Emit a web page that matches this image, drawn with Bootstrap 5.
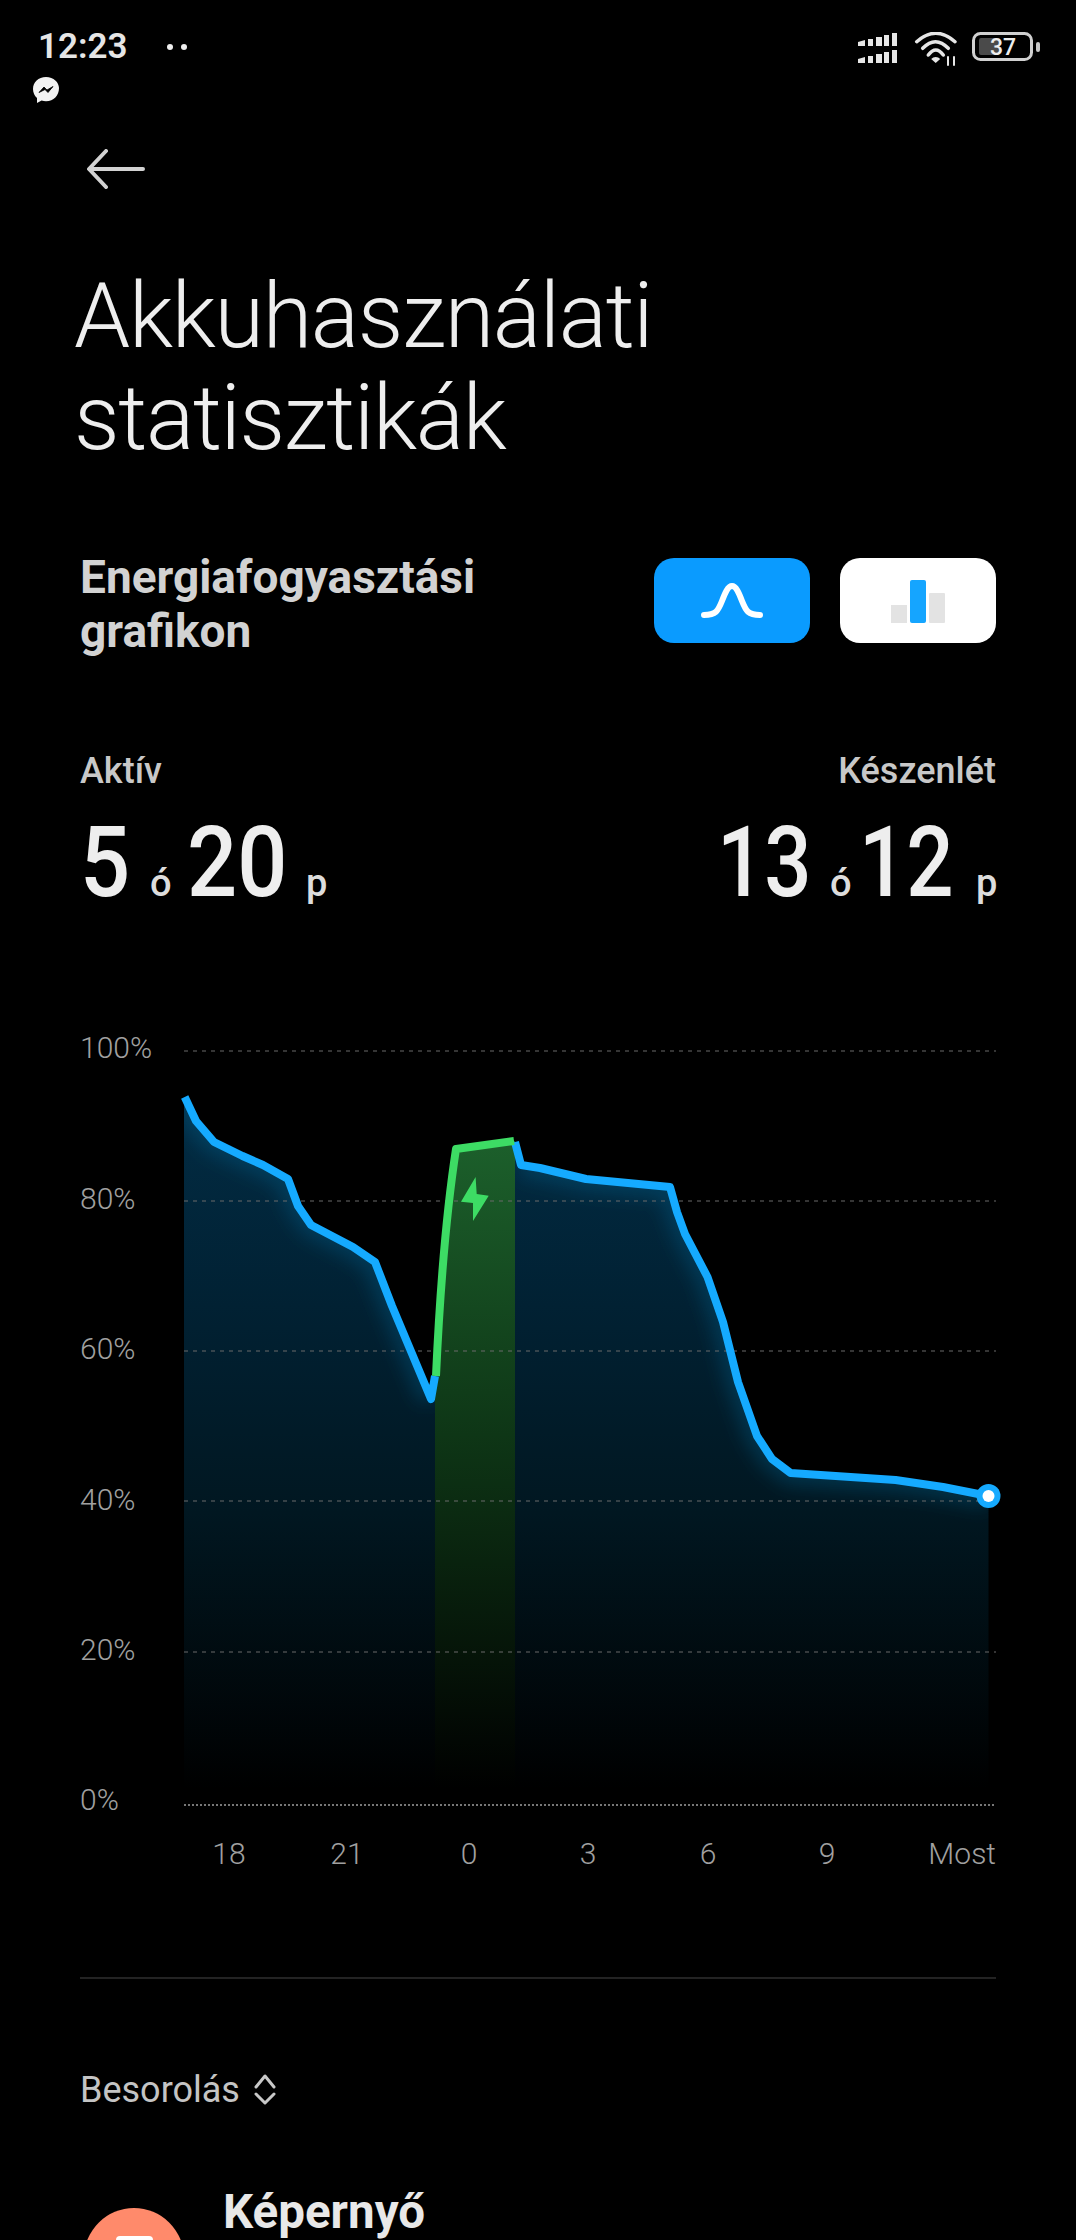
<!DOCTYPE html>
<html lang="hu">
<head>
<meta charset="utf-8">
<title>Akkuhasználati statisztikák</title>
<link href="https://cdn.jsdelivr.net/npm/bootstrap@5.3.0/dist/css/bootstrap.min.css" rel="stylesheet">
<style>
html,body{background:#000;margin:0}
body{font-family:Roboto,"Liberation Sans",sans-serif;width:1076px;height:2240px;overflow:hidden;color:#eee}
svg{display:block}
.status-area{height:130px;padding:0 36px 0 38px}
.clock{font-size:35px;font-weight:600;line-height:40px;color:#e6e6e6;padding-top:27px}
.dots{gap:8px;margin:44px 0 0 39px}
.dots i{width:6px;height:6px;border-radius:50%;background:#eee;display:block}
.msg-icon{margin:8px 0 0 -7px}
.sys-icons{padding-top:32px;gap:14px}
.back-row{height:40px;padding-left:86px;margin:19px 0 77px}
.page-title{font-size:90px;font-weight:300;line-height:102px;margin:0 0 80px;padding-left:74px;color:#eee;letter-spacing:-1.3px}
.side{padding:0 80px}
.chart-head{font-size:46px;font-weight:700;line-height:54px;color:#d2d2d2;margin:0}
.mode-btn{width:156px;height:85px;border:0;border-radius:20px;padding:0;margin-top:8px}
.mode-a{background:#0a9bff}
.mode-b{background:#fff}
.mode-gap{gap:30px}
.stat-row{margin-top:93px}
.stat-label{font-size:36px;font-weight:500;line-height:40px;color:#c8c8c8}
.stat-num{font-size:98px;font-weight:500;line-height:100px;color:#eee;margin-top:22px}
.digits{display:inline-block;transform:scaleX(.9);transform-origin:left center;white-space:nowrap}
.text-end .digits{transform:scaleX(.85)}
.one{width:50px}
.two{width:99px}
.text-end .two{width:94px}
.stat-unit{font-size:38px;font-weight:500;color:#ddd;width:21px}
.stat-num .stat-unit:nth-child(2){margin-left:20px;margin-right:16px}
.stat-num .stat-unit:nth-child(4){margin-left:20px}
.text-end .stat-num .stat-unit:nth-child(2){margin-left:19px;margin-right:8px}
.text-end .stat-num .stat-unit:nth-child(4){margin-left:23px;margin-right:-1px}
.chart-wrap{margin-top:96px}
.chart-wrap text{font-family:Roboto,"Liberation Sans",sans-serif;font-size:30px;font-weight:300;fill:#a0a0a0}
.rule{height:2px;background:#232323;margin:88px 80px 0}
.sort-row{font-size:36px;line-height:40px;color:#c4c4c4;margin-top:91px;padding-left:80px;gap:14px}
.app-row{margin-top:77px;padding-left:84px;gap:39px}
.app-dot{width:100px;height:100px;border-radius:50%;background:#ff8a6b;margin-top:21px;flex:none;display:flex;justify-content:center;padding-top:28px}
.app-dot i{width:37px;height:28px;border-radius:4px;background:#fff;display:block}
.app-name{font-size:47.500px;font-weight:700;line-height:50px;color:#e8e8e8}
</style>
</head>
<body>
<div class="status-area d-flex justify-content-between align-items-start">
  <div>
    <div class="d-flex align-items-start">
      <div class="clock">12:23</div>
      <div class="dots d-flex"><i></i><i></i></div>
    </div>
    <svg class="msg-icon" width="30" height="30" viewBox="0 0 30 30"><path d="M15 2C7.300 2 2 7.400 2 14c0 3.600 1.500 6.800 4 9v5l4.600-2.400c1.400.4 2.900.6 4.400.6 7.700 0 13-5.600 13-13.200C28 7.400 22.700 2 15 2z" fill="#f2f2f2"/><path d="M8 17.500l5-5.500 3 3 6-3.500-5 6-3-3z" fill="#000" stroke="#000" stroke-width=".8" stroke-linejoin="round"/></svg>
  </div>
  <div class="sys-icons d-flex align-items-start">
    <svg width="42" height="31" viewBox="-2 0 42 31" fill="#e6e6e6"><path d="M0 10l7-2v6H0zM10 7h5v7h-5zM18 5h6v9h-6zM26 3h5v11h-5zM34 1h5v13h-5z"/><path d="M0 27l7-2v6H0zM10 24h5v7h-5zM18 22h6v9h-6zM26 20h5v11h-5zM34 18h5v13h-5z"/></svg>
    <svg width="46" height="34" viewBox="0 0 46 34" fill="none" stroke="#e6e6e6" stroke-width="3.500" stroke-linecap="round"><path d="M4.700 9.700Q23.700-7.100 43 9.700"/><path d="M10.700 16.300Q23.500 3 36.300 16.300"/><path d="M16.300 23Q23.800 13 31.300 23"/><path d="M23.700 31l-4.500-4a6 6 0 0 1 9 0z" fill="#e6e6e6" stroke="none"/><path d="M36 25v8M42 25v8" stroke-width="2"/></svg>
    <svg width="68" height="31" viewBox="0 0 68 31"><rect x="1.500" y="1.500" width="58" height="26" rx="7" fill="none" stroke="#d0d0d0" stroke-width="3"/><rect x="7" y="6" width="21" height="17" rx="2" fill="#4a4a4a"/><text x="31" y="23" text-anchor="middle" font-family="Roboto,sans-serif" font-size="23" font-weight="500" fill="#eee">37</text><rect x="64" y="10" width="4" height="10" rx="2" fill="#c8c8c8"/></svg>
  </div>
</div>

<div class="back-row">
  <svg width="62" height="40" viewBox="0 0 62 40" fill="none" stroke="#d2d2d2" stroke-width="4" stroke-linecap="round" stroke-linejoin="round"><path d="M57 20H4M20 2 3 20l17 18"/></svg>
</div>

<h1 class="page-title">Akkuhasználati<br>statisztikák</h1>

<section class="side">
  <div class="d-flex justify-content-between align-items-start">
    <h2 class="chart-head">Energiafogyasztási<br>grafikon</h2>
    <div class="d-flex mode-gap">
      <button type="button" class="btn mode-btn mode-a" aria-label="Görbe">
        <svg width="156" height="85" viewBox="0 0 156 85" fill="none"><path d="M50 57c12 0 14-4 18-14 3-8 6-15 10-15s7 7 10 15c4 10 6 14 18 14" stroke="#fff" stroke-width="6" stroke-linecap="round"/></svg>
      </button>
      <button type="button" class="btn mode-btn mode-b" aria-label="Oszlop">
        <svg width="156" height="85" viewBox="0 0 156 85"><rect x="51" y="47" width="16" height="18" fill="#e3e3e3"/><rect x="70" y="22" width="16" height="43" rx="2" fill="#15a5ff"/><rect x="89" y="35" width="16" height="30" rx="1" fill="#e3e3e3"/></svg>
      </button>
    </div>
  </div>

  <div class="stat-row d-flex justify-content-between">
    <div>
      <div class="stat-label">Aktív</div>
      <div class="stat-num d-flex align-items-baseline"><span class="digits one">5</span><span class="stat-unit">ó</span><span class="digits two">20</span><span class="stat-unit">p</span></div>
    </div>
    <div class="text-end">
      <div class="stat-label">Készenlét</div>
      <div class="stat-num d-flex align-items-baseline"><span class="digits two">13</span><span class="stat-unit">ó</span><span class="digits two">12</span><span class="stat-unit">p</span></div>
    </div>
  </div>
</section>

<div class="chart-wrap">
<svg width="1076" height="860" viewBox="0 1030 1076 860" role="img" aria-label="Akkuszint grafikon">
  <defs>
    <linearGradient id="blueFill" gradientUnits="userSpaceOnUse" x1="0" y1="1100" x2="0" y2="1790">
      <stop offset="0" stop-color="#022c44"/>
      <stop offset=".3" stop-color="#012133"/>
      <stop offset=".6" stop-color="#011721"/>
      <stop offset="1" stop-color="#000"/>
    </linearGradient>
    <linearGradient id="greenFill" gradientUnits="userSpaceOnUse" x1="0" y1="1145" x2="0" y2="1790">
      <stop offset="0" stop-color="#1c5f2b"/>
      <stop offset=".45" stop-color="#0e3616"/>
      <stop offset="1" stop-color="#000"/>
    </linearGradient>
    <clipPath id="areaClip"><path d="M184 1098 196 1122 214 1143 242.500 1157 263 1166 288 1180 298 1207 311 1226 353 1248 375 1263 392 1307 431 1400 435 1377V1800H184zM515 1143 521 1166 540 1169 586 1180 670 1188 677 1213 685 1235 707.500 1278 723 1323 738 1383 757 1437 772 1460 790.600 1474 895.600 1481 943 1488 988.500 1497V1800H515z"/></clipPath>
    <filter id="soft" x="-10%" y="-10%" width="120%" height="120%"><feGaussianBlur stdDeviation="9"/></filter>
  </defs>
  <path d="M184 1098 196 1122 214 1143 242.500 1157 263 1166 288 1180 298 1207 311 1226 353 1248 375 1263 392 1307 431 1400 435 1377V1800H184zM515 1143 521 1166 540 1169 586 1180 670 1188 677 1213 685 1235 707.500 1278 723 1323 738 1383 757 1437 772 1460 790.600 1474 895.600 1481 943 1488 988.500 1497V1800H515z" fill="url(#blueFill)"/>
  <g clip-path="url(#areaClip)"><path d="M184 1098 196 1122 214 1143 242.500 1157 263 1166 288 1180 298 1207 311 1226 353 1248 375 1263 392 1307 431 1400M521 1166 540 1169 586 1180 670 1188 677 1213 685 1235 707.500 1278 723 1323 738 1383 757 1437 772 1460 790.600 1474 895.600 1481 943 1488 988.500 1497" fill="none" stroke="#0b6a9c" stroke-opacity=".32" stroke-width="24" filter="url(#soft)"/></g>
  <path d="M435 1377C439 1290 445 1215 456 1150L515 1142V1800H435z" fill="url(#greenFill)"/>
  <g stroke="#6a6a6a" stroke-width="1.200" stroke-dasharray="4 5">
    <path d="M184 1052H996M184 1202H996M184 1352H996M184 1502H996M184 1653H996"/>
  </g>
  <path d="M184 1806H996" stroke="#777" stroke-width="2" stroke-dasharray="2 2"/>
  <path d="M184.700 1098 196 1122 214 1143 242.500 1157 263 1166 288 1180 298 1207 311 1226 353 1248 375 1263 392 1307 431 1400 435 1377" fill="none" stroke="#15aaff" stroke-width="8" stroke-linejoin="round"/>
  <path d="M515 1143 521 1166 540 1169 586 1180 670 1188 677 1213 685 1235 707.500 1278 723 1323 738 1383 757 1437 772 1460 790.600 1474 895.600 1481 943 1488 988.500 1497" fill="none" stroke="#15aaff" stroke-width="8" stroke-linejoin="round"/>
  <path d="M436 1377C440 1290 446 1215 456 1150L514 1142" fill="none" stroke="#3ddc64" stroke-width="8" stroke-linejoin="round"/>
  <path d="M475.600 1178 461 1202.700 473 1204 473 1222 488.700 1196.700 476.700 1195z" fill="#3ddc64"/>
  <circle cx="988.500" cy="1497" r="12" fill="#15aaff"/>
  <circle cx="988.500" cy="1497" r="6" fill="#fff"/>
  <g>
    <text x="80" y="1059">100%</text><text x="80" y="1210">80%</text><text x="80" y="1360">60%</text><text x="80" y="1511">40%</text><text x="80" y="1661">20%</text><text x="80" y="1811">0%</text>
    <text x="229" y="1865" text-anchor="middle">18</text><text x="347" y="1865" text-anchor="middle">21</text><text x="469" y="1865" text-anchor="middle">0</text><text x="588" y="1865" text-anchor="middle">3</text><text x="708" y="1865" text-anchor="middle">6</text><text x="827" y="1865" text-anchor="middle">9</text><text x="996" y="1865" text-anchor="end">Most</text>
  </g>
</svg>
</div>

<div class="rule"></div>

<div class="sort-row d-flex align-items-center">
  <span>Besorolás</span>
  <svg width="22" height="32" viewBox="0 0 22 32" fill="none" stroke="#c8c8c8" stroke-width="3" stroke-linecap="round" stroke-linejoin="round"><path d="M2 13 11 2l9 11M2 20l9 9 9-9"/></svg>
</div>

<div class="app-row d-flex align-items-start">
  <div class="app-dot"><i></i></div>
  <div class="app-name">Képernyő</div>
</div>
<script src="https://cdn.jsdelivr.net/npm/bootstrap@5.3.0/dist/js/bootstrap.bundle.min.js"></script>
</body>
</html>
